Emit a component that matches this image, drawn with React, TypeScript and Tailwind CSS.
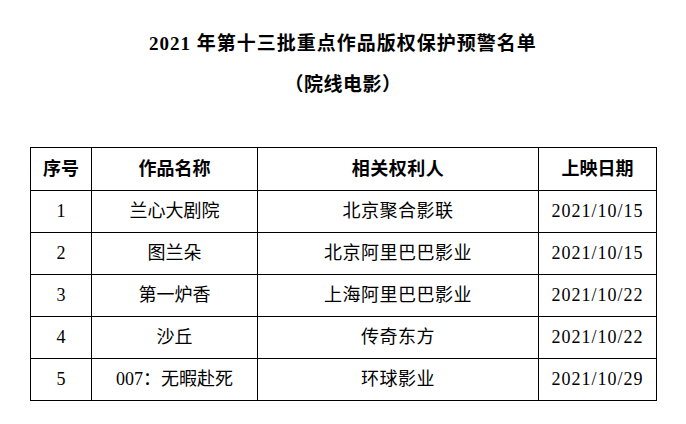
const rows = [
  { no: '1', title: '兰心大剧院', owner: '北京聚合影联', date: '2021/10/15' },
  { no: '2', title: '图兰朵', owner: '北京阿里巴巴影业', date: '2021/10/15' },
  { no: '3', title: '第一炉香', owner: '上海阿里巴巴影业', date: '2021/10/22' },
  { no: '4', title: '沙丘', owner: '传奇东方', date: '2021/10/22' },
  { no: '5', title: '007：无暇赴死', owner: '环球影业', date: '2021/10/29' },
]

const font = { fontFamily: '"Liberation Serif", "Noto Sans CJK SC", serif' }

export default function App() {
  return (
    <div className="w-[686px] h-[424px] bg-white text-black overflow-hidden" style={font}>
      {/* Heading */}
      <h1 className="pt-[32px] text-center text-[19px] leading-[24px] font-bold tracking-[1px]">
        2021 年第十三批重点作品版权保护预警名单
      </h1>
      <h2 className="mt-[17px] text-center text-[19px] leading-[24px] font-bold tracking-[0.5px]">（院线电影）</h2>

      {/* Table */}
      <table className="mt-[50px] ml-[30px] w-[626px] table-fixed border-collapse text-[18px]">
        <colgroup>
          <col className="w-[61px]" />
          <col className="w-[166px]" />
          <col className="w-[281px]" />
          <col className="w-[118px]" />
        </colgroup>
        <thead>
          <tr className="h-[43px] font-bold">
            <th className="border border-black text-center">序号</th>
            <th className="border border-black text-center">作品名称</th>
            <th className="border border-black text-center tracking-[0.5px]">相关权利人</th>
            <th className="border border-black text-center">上映日期</th>
          </tr>
        </thead>
        <tbody>
          {rows.map((r) => (
            <tr key={r.no} className="h-[42px]">
              <td className="border border-black text-center">{r.no}</td>
              <td className="border border-black text-center">{r.title}</td>
              <td className="border border-black text-center tracking-[0.5px]">{r.owner}</td>
              <td className="border border-black text-center tracking-[1px]">{r.date}</td>
            </tr>
          ))}
        </tbody>
      </table>
    </div>
  )
}
